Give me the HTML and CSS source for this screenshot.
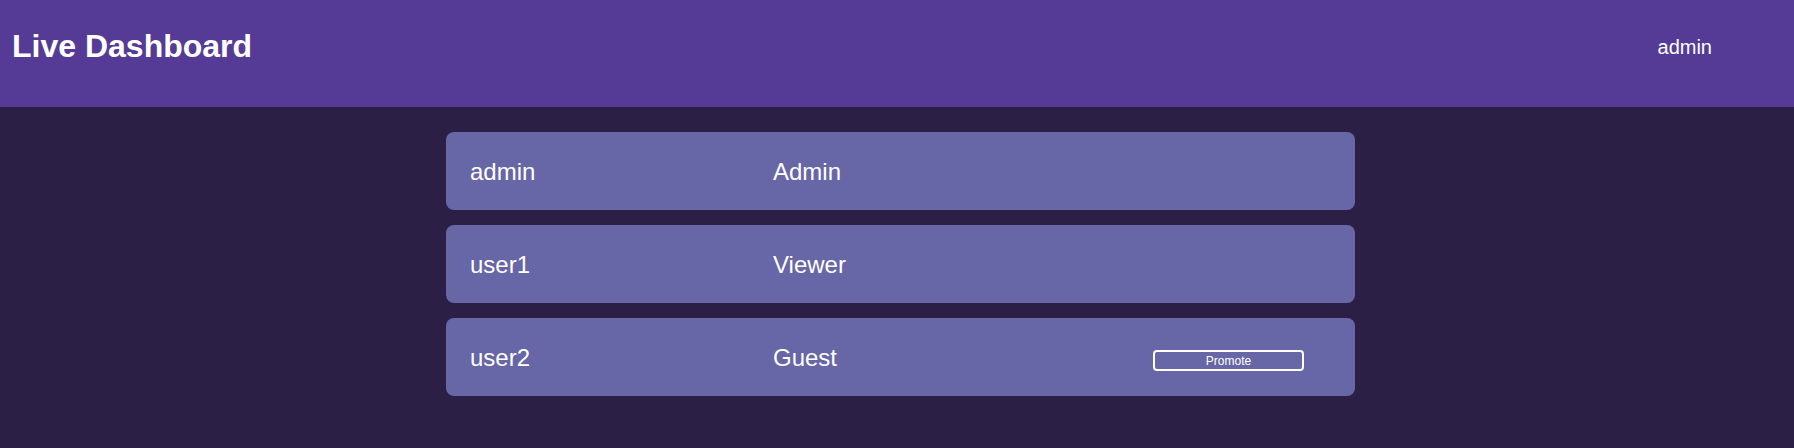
FILE: index.html
```html
<!DOCTYPE html>
<html>
<head>
<meta charset="utf-8">
<link rel="stylesheet" href="styles.css">
</head>
<body>
<header class="topbar">
  <h1 class="title">Live Dashboard</h1>
  <span class="user">admin</span>
</header>
<main class="list">
  <div class="card"><span class="name">admin</span><span class="role">Admin</span><span></span></div>
  <div class="card"><span class="name">user1</span><span class="role">Viewer</span><span></span></div>
  <div class="card"><span class="name">user2</span><span class="role">Guest</span><button class="promote">Promote</button></div>
</main>
</body>
</html>
```
FILE: styles.css
```css
html, body {
  margin: 0;
  padding: 0;
  background: #2b1f45;
  font-family: "Liberation Sans", Arial, sans-serif;
  color: #fff;
}
.topbar {
  height: 107px;
  background: #553b96;
  display: flex;
  align-items: flex-start;
  justify-content: space-between;
  padding: 0 82px 0 12px;
  box-sizing: border-box;
}
.title {
  margin: 28px 0 0;
  font-size: 32px;
  font-weight: bold;
  line-height: normal;
}
.user {
  margin-top: 36px;
  font-size: 20px;
  line-height: normal;
}
.list {
  width: 909px;
  margin: 25px 0 0 446px;
  display: flex;
  flex-direction: column;
  gap: 15px;
}
.card {
  height: 78px;
  background: #6766a6;
  border-radius: 8px;
  padding: 0 24px;
  display: grid;
  grid-template-columns: 303px 380px 151px;
  align-items: center;
  font-size: 24px;
}
.name, .role {
  padding-top: 1px;
}
.promote {
  width: 151px;
  height: 21px;
  margin-top: 7px;
  background: transparent;
  border: 2px solid #fff;
  border-radius: 4px;
  color: #fff;
  font-family: "Liberation Sans", Arial, sans-serif;
  font-size: 12px;
  font-weight: normal;
  padding: 0;
  line-height: 16px;
}
```
